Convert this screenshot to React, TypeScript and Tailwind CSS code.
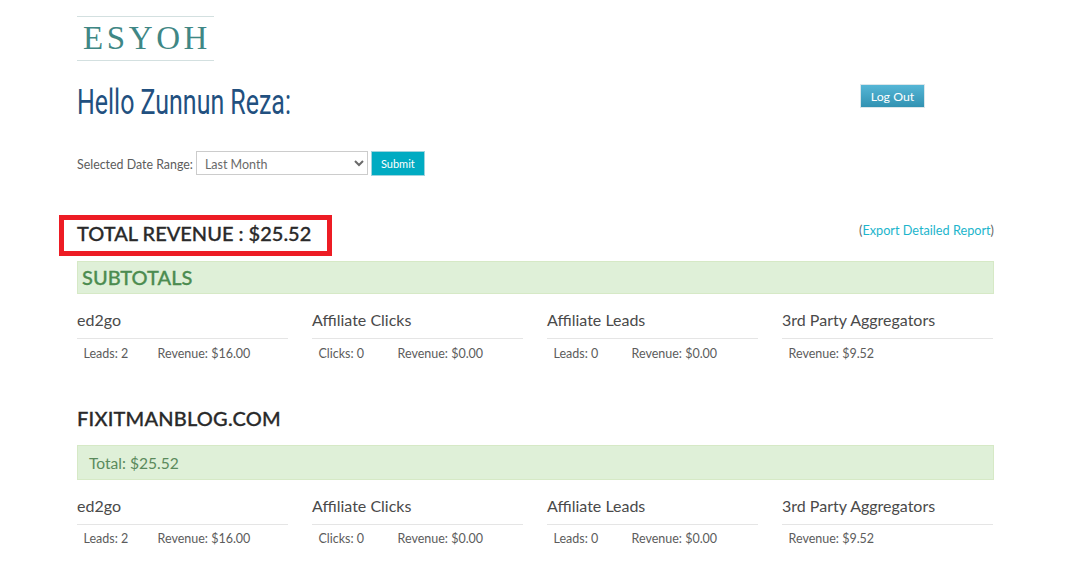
function Col({ title, items }: { title: string; items: [string, string][] }) {
  return (
    <div>
      <div className="h-[45px] border-b border-[#e5e5e5] pt-[15px] text-[16px] leading-[22px] text-[#4a4a4a]">{title}</div>
      <div className="flex pl-[6.5px] pt-[5.5px] text-[12.5px] leading-[18px] text-[#5c5c5c]">
        {items.map(([a, w], i) => (
          <span key={i} className={w}>{a}</span>
        ))}
      </div>
    </div>
  );
}

function Cols() {
  return (
    <div className="grid grid-cols-[211px_211px_211px_211px] gap-x-[24px]">
      <Col title="ed2go" items={[["Leads: 2", "w-[74px]"], ["Revenue: $16.00", ""]]} />
      <Col title="Affiliate Clicks" items={[["Clicks: 0", "w-[79px]"], ["Revenue: $0.00", ""]]} />
      <Col title="Affiliate Leads" items={[["Leads: 0", "w-[78px]"], ["Revenue: $0.00", ""]]} />
      <Col title="3rd Party Aggregators" items={[["Revenue: $9.52", ""]]} />
    </div>
  );
}

export default function App() {
  return (
    <div className="h-[582px] w-[1079px] overflow-hidden bg-white font-['Lato','Liberation_Sans',sans-serif]">
      <div className="ml-[77px] w-[917px]">
        <div className="pt-[16px]">
          <div className="flex h-[45px] w-[137px] items-center justify-center border-y border-[#d3e0e0] pl-[3px] font-['Liberation_Serif',serif] text-[33px] leading-none tracking-[3.6px] text-[#3f8785]">
            ESYOH
          </div>
        </div>
        <div className="flex h-[90px] items-start justify-between">
          <h1 className="mt-[20px] origin-left scale-x-[0.713] whitespace-nowrap font-['Roboto',sans-serif] text-[35px] leading-[44px] text-[#22507f]">
            Hello Zunnun Reza:
          </h1>
          <button className="mr-[69px] mt-[23px] h-[24px] w-[65px] border border-[#dbe6ea] bg-gradient-to-b from-[#55b6d6] to-[#3192b2] pt-[2px] text-[12.3px] leading-none text-white">
            Log Out
          </button>
        </div>
        <div className="flex h-[24px] items-center">
          <span className="mr-[3px] pt-[4px] text-[12.4px] text-[#5c5c5c]">Selected Date Range:</span>
          <select defaultValue="Last Month" className="h-[24px] w-[172px] border border-[#ccc] bg-white pl-[4px] pt-[2px] text-[12.5px] text-[#6a6a6a] outline-none">
            <option>Last Month</option>
          </select>
          <button className="ml-[3px] h-[25px] w-[54px] border border-[#9fd4de] bg-[#00abc2] pt-[2px] text-[11px] text-white">Submit</button>
        </div>
        <div className="relative mt-[40px] flex h-[46px] items-start justify-between pt-[6px]">
          <div className="text-[20px] font-medium leading-[24px] text-[#2a2a2a] [-webkit-text-stroke:0.3px_#2a2a2a]">TOTAL REVENUE : $25.52</div>
          <div className="pt-[1px] text-[12.7px] leading-[16px] text-[#666]">
            (<span className="text-[#1cb5cc]">Export Detailed Report</span>)
          </div>
          <div className="absolute left-[-18px] top-0 h-[41px] w-[273px] border-[5px] border-[#ed1c24]" />
        </div>
        <div className="flex h-[33px] items-center border border-[#d6e9c6] bg-[#dff0d8] pb-[1px] pl-[4px] text-[20px] font-medium text-[#4c8c50] [-webkit-text-stroke:0.3px_#4c8c50]">
          SUBTOTALS
        </div>
        <Cols />
        <div className="mt-[36px] h-[40px] pt-[7px] text-[20px] font-medium leading-[24px] tracking-[0.2px] text-[#2a2a2a] [-webkit-text-stroke:0.3px_#2a2a2a]">FIXITMANBLOG.COM</div>
        <div className="mt-[6px] flex h-[35px] items-center border border-[#d6e9c6] bg-[#dff0d8] pl-[11px] pt-[3px] text-[15.6px] text-[#5a8a5c]">
          Total: $25.52
        </div>
        <Cols />
      </div>
    </div>
  );
}
